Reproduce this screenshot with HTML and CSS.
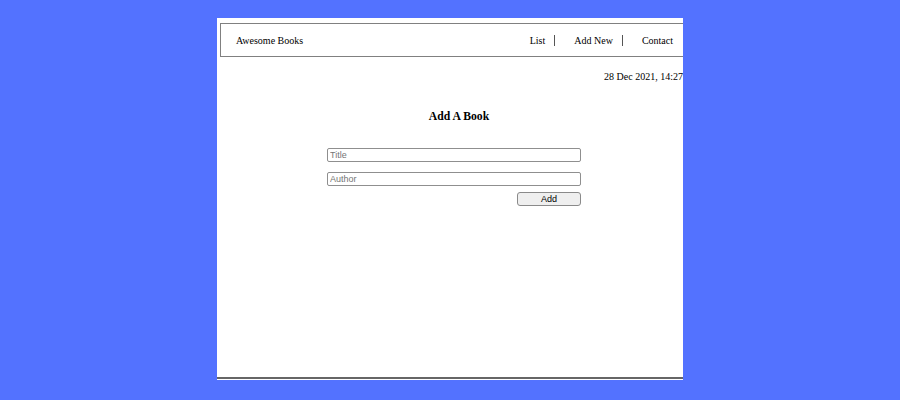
FILE: index.html
```html
<!DOCTYPE html>
<html lang="en">
<head>
<meta charset="utf-8">
<title>Awesome Books</title>
<link rel="stylesheet" href="styles.css">
</head>
<body>
<div class="frame">
  <div class="page">
    <header class="header">
      <span class="brand">Awesome Books</span>
      <ul class="nav">
        <li class="nav-item">List</li>
        <li class="nav-item">Add New</li>
        <li class="nav-item last">Contact</li>
      </ul>
    </header>
    <div class="date">28 Dec 2021, 14:27</div>
    <h2 class="title">Add A Book</h2>
    <form class="form">
      <input class="field" type="text" placeholder="Title">
      <input class="field field-author" type="text" placeholder="Author">
      <button class="add-btn" type="button">Add</button>
    </form>
  </div>
  <div class="footer-line"></div>
</div>
</body>
</html>
```
FILE: styles.css
```css
html, body {
  margin: 0;
  padding: 0;
}
body {
  background: #5372ff;
  height: 400px;
  overflow: hidden;
  font-family: "Liberation Serif", "Times New Roman", serif;
  color: #000;
}
.frame {
  width: 466px;
  height: 362px;
  margin: 18px auto 0;
  background: #fff;
  overflow: hidden;
  display: flex;
  flex-direction: column;
}
.page {
  width: 478px;
  margin-left: 3px;
  flex: 1;
}
.header {
  margin-top: 5px;
  height: 34px;
  box-sizing: border-box;
  border: 1px solid #808080;
  display: flex;
  align-items: center;
  justify-content: space-between;
  padding: 0 15px;
  font-size: 10px;
}
.nav {
  display: flex;
  list-style: none;
  margin: 0;
  padding: 0;
}
.nav-item {
  line-height: 11px;
  padding: 0 9px 0 19px;
  border-right: 1px solid #555;
}
.nav-item.last {
  border-right: none;
}
.date {
  margin-top: 14px;
  padding-right: 15px;
  text-align: right;
  font-size: 10px;
  line-height: 12px;
}
.title {
  margin: 27px 0 0;
  font-size: 11.7px;
  line-height: 14px;
  text-align: center;
  font-weight: bold;
}
.form {
  margin: 24px 0 0 107px;
  width: 254px;
  display: flex;
  flex-direction: column;
}
.field {
  box-sizing: border-box;
  width: 254px;
  height: 14px;
  margin: 0;
  padding: 0 2px;
  border: 1px solid #8f8f8f;
  border-radius: 2px;
  font-family: "Liberation Sans", Arial, sans-serif;
  font-size: 9px;
  outline: none;
}
.field::placeholder {
  color: #757575;
}
.field-author {
  margin-top: 10px;
}
.add-btn {
  align-self: flex-end;
  box-sizing: border-box;
  width: 64px;
  height: 14px;
  margin-top: 6px;
  padding: 0;
  background: #efefef;
  border: 1px solid #8a8a8a;
  border-radius: 3px;
  font-family: "Liberation Sans", Arial, sans-serif;
  font-size: 9px;
  line-height: 12px;
  color: #000;
}
.footer-line {
  height: 1px;
  border-top: 2px solid #666;
  background: #fff;
}
```
